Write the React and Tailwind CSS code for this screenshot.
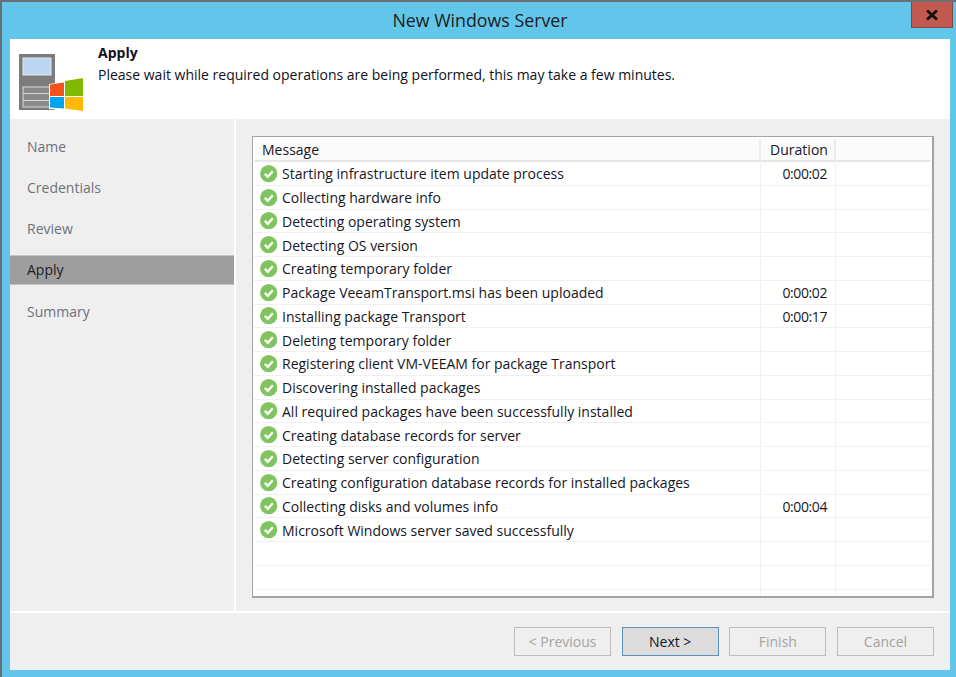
import React from "react";

const steps = [
  { text: "Starting infrastructure item update process", time: "0:00:02" },
  { text: "Collecting hardware info" },
  { text: "Detecting operating system" },
  { text: "Detecting OS version" },
  { text: "Creating temporary folder" },
  { text: "Package VeeamTransport.msi has been uploaded", time: "0:00:02" },
  { text: "Installing package Transport", time: "0:00:17" },
  { text: "Deleting temporary folder" },
  { text: "Registering client VM-VEEAM for package Transport" },
  { text: "Discovering installed packages" },
  { text: "All required packages have been successfully installed" },
  { text: "Creating database records for server" },
  { text: "Detecting server configuration" },
  { text: "Creating configuration database records for installed packages" },
  { text: "Collecting disks and volumes info", time: "0:00:04" },
  { text: "Microsoft Windows server saved successfully" },
  { text: "" },
  { text: "" },
  { text: "" },
];

const navItems = ["Name", "Credentials", "Review", "Apply", "Summary"];

const CheckIcon = () => (
  <svg width="18" height="18" viewBox="0 0 18 18" className="shrink-0">
    <circle cx="8.7" cy="8.7" r="8.6" fill="#7fc45f" />
    <path d="M4.8 8.9 L7.8 11.7 L12.8 6.3" fill="none" stroke="#fff" strokeWidth="2.4" />
  </svg>
);

const ServerLogo = () => (
  <svg width="66" height="60" viewBox="0 0 66 60">
    <rect x="1" y="1" width="36" height="56" fill="#7c7c7c" />
    <rect x="5" y="5" width="28" height="17" fill="#bcd6f2" stroke="#e8e8e8" strokeWidth="1" />
    <rect x="5" y="34" width="28" height="20" fill="#8a8a8a" stroke="#d8d8d8" strokeWidth="1" />
    <path d="M5 40.5 H33 M5 47.5 H33" stroke="#d8d8d8" strokeWidth="1" />
    <path d="M31 31 L46 29 V44 H31 Z" fill="#fff" />
    <path d="M31 44 H46 V57 L31 56 Z" fill="#fff" />
    <path d="M32 31.5 L46 29.5 V43 H32 Z" fill="#f4511e" />
    <path d="M47 28 L65 25 V43 H47 Z" fill="#7fba00" />
    <path d="M32 44 H46 V55.5 L32 54.5 Z" fill="#00a4ef" />
    <path d="M47 44 H65 V58 L47 55.5 Z" fill="#ffb900" />
  </svg>
);

const FooterButton = ({ label, active }) => (
  <button
    className={
      active
        ? "w-[97px] h-[29px] border border-[#5b93c0] bg-[#dcdcdc] text-[#14141f] text-[14px]"
        : "w-[97px] h-[29px] border border-[#bdbdbd] bg-[#efefef] text-[#a3a3a3] text-[14px]"
    }
  >
    {label}
  </button>
);

export default function App() {
  return (
    <div
      className="w-[956px] h-[677px] overflow-hidden bg-[#62c6ea] border-l-2 border-t-2 border-[#6b6f73] flex flex-col"
      style={{ fontFamily: "'Open Sans', 'Noto Sans', sans-serif" }}
    >
      <div className="relative h-[37px] shrink-0 flex items-center justify-center pl-[2px] text-[17.8px] text-[#1c1c1c]">
        New Windows Server
        <div className="absolute top-0 right-[3px] w-[42px] h-[26px] bg-[#c25a50] border border-[#7c4a46] border-t-0 flex items-center justify-center">
          <svg width="14" height="12" viewBox="0 0 14 12">
            <path d="M2 1.5 L12 10.5 M12 1.5 L2 10.5" stroke="#111" strokeWidth="2.8" />
          </svg>
        </div>
      </div>

      <div className="ml-[8px] w-[940px] h-[631px] flex flex-col bg-[#efefef]">
        <div className="h-[80px] shrink-0 bg-white flex">
          <div className="w-[88px] pl-[8px] pt-[14px] shrink-0">
            <ServerLogo />
          </div>
          <div className="pt-[3px] text-[14px] leading-[22px] text-[#101020]">
            <div className="font-bold">Apply</div>
            <div>Please wait while required operations are being performed, this may take a few minutes.</div>
          </div>
        </div>

        <div className="flex-1 flex min-h-0">
          <div className="w-[224px] shrink-0 pt-[12px] text-[14px] text-[#6f6f7a]">
            {navItems.map((item) =>
              item === "Apply" ? (
                <div
                  key={item}
                  className="h-[30px] mb-[11.3px] pl-[17px] flex items-center bg-[#9e9e9e] border-t border-b border-[#c4c4c4] text-[#1a1a24]"
                >
                  {item}
                </div>
              ) : (
                <div key={item} className="h-[30px] mb-[11.3px] pl-[17px] flex items-center">
                  {item}
                </div>
              )
            )}
          </div>

          <div className="w-[2px] bg-white shrink-0" />

          <div className="flex-1 pl-[16px] pr-[16px] pt-[17px] pb-[14px]">
            <div className="h-[462px] overflow-hidden border border-[#a0a4a8] border-b-2 border-r-2 bg-white p-[1px] text-[14px] text-[#16161f]">
              <div className="grid grid-cols-[507px_75px_1fr] h-[24px] pt-[1px] bg-[#fbfbfb] border-b-2 border-[#e6e6e6]">
                <div className="pl-[8px] flex items-center border-r-2 border-[#ebebeb]">Message</div>
                <div className="pl-[3px] flex items-center justify-center border-r-2 border-[#ebebeb]">Duration</div>
                <div />
              </div>
              {steps.map((step, i) => (
                <div key={i} className="grid grid-cols-[507px_75px_1fr] h-[23.75px] pt-[1px] border-b border-[#f0f0f0]">
                  <div className="pl-[6px] flex items-center gap-[4px] border-r border-[#f0f0f0] whitespace-nowrap">
                    {step.text && <CheckIcon />}
                    {step.text}
                  </div>
                  <div className="pr-[8px] flex items-center justify-end tracking-[-0.4px] border-r border-[#f0f0f0]">{step.time}</div>
                  <div />
                </div>
              ))}
            </div>
          </div>
        </div>

        <div className="h-[59px] shrink-0 border-t-2 border-white flex items-center justify-end gap-[10.67px] pr-[16px] pb-[1px]">
          <FooterButton label="< Previous" />
          <FooterButton label="Next >" active />
          <FooterButton label="Finish" />
          <FooterButton label="Cancel" />
        </div>
      </div>
    </div>
  );
}
